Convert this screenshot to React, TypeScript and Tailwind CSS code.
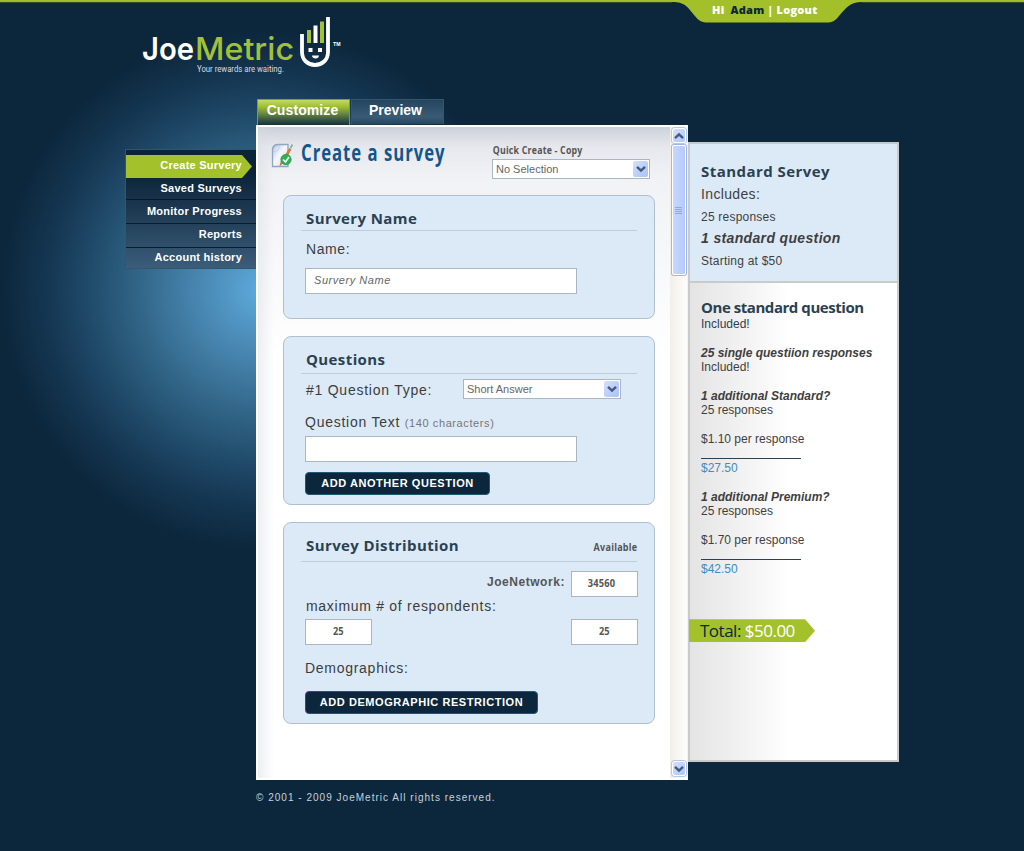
import React from "react";

const sans = "font-['Liberation_Sans',Arial,sans-serif]";
const humanist = "font-['Open_Sans','Noto_Sans',sans-serif]";

function TopBar() {
  return (
    <div className="relative h-[24px] w-full">
      <svg className="block" width="1024" height="24" viewBox="0 0 1024 24">
        <path d="M0 0H1024V2H862C850 2 846 8 839 16C835 21 832 22.500 827 22.500H708C702 22.500 699 21 695 16C688 8 686 2 672 2H0Z" fill="#a3c02b" />
        <path d="M0 2.300H672M862 2.300H1024" stroke="#5d7a2c" strokeWidth="0.600" />
      </svg>
      <div className={`absolute left-[712px] top-[2px] whitespace-nowrap text-[11px] font-extrabold leading-[16px] tracking-[0.25px] text-white ${humanist}`}>
        Hi<span className="ml-[6px] text-[#0c273c]">Adam</span> | Logout
      </div>
    </div>
  );
}

function Logo() {
  return (
    <svg className="ml-[140px] -mt-[9px] block" width="204" height="62" viewBox="140 15 204 62">
      <g fontFamily="Inter, sans-serif" fontSize="31.500" fontWeight="600">
        <text x="142" y="60" fill="#fff" textLength="52" lengthAdjust="spacingAndGlyphs">Joe</text>
        <text x="195" y="60" fill="#a3c03a" fontWeight="500" textLength="99" lengthAdjust="spacingAndGlyphs">Metric</text>
      </g>
      <text x="197" y="71.500" fill="#d5dce2" fontFamily="Roboto, sans-serif" fontSize="8.500" textLength="87" lengthAdjust="spacingAndGlyphs">Your rewards are waiting.</text>
      <path d="M302 34V52C302 60 308 65 315 65S328 60 328 52V17" fill="none" stroke="#fff" strokeWidth="3.800" />
      <path d="M307 30h4v13h-4zM320 21.500h4V43h-4z" fill="#a3c03a" />
      <path d="M313.500 25.500h4V43h-4z M308.500 48h4v4h-4z M318 48h4v4h-4z M312 55.500h7c0 4-7 4-7 0z" fill="#fff" />
      <text x="333" y="45.500" fill="#fff" fontFamily="Liberation Sans" fontWeight="700" fontSize="5" textLength="7.500" lengthAdjust="spacingAndGlyphs">TM</text>
    </svg>
  );
}

function Nav() {
  const row = "h-[24px] border-b border-[#0a1c30] pr-[14px] text-right leading-[19px]";
  return (
    <nav className={`mt-[50px] h-[120px] w-[131px] border border-r-0 border-[#36546c] bg-linear-to-b from-[#0b2439] from-20% to-[#3b5d7a] pt-[5px] text-[11px] font-bold tracking-[0.25px] text-white ${sans}`}>
      <div className="h-[23px] w-[126px] bg-[#a3c12a] pr-[10px] text-right leading-[21px] [clip-path:polygon(0_0,116px_0,100%_50%,116px_100%,0_100%)]">Create Survery</div>
      <div className="h-[22px] border-b border-[#06182c] pr-[14px] text-right leading-[20px]">Saved Surveys</div>
      <div className={`${row} pt-[2px]`}>Monitor Progress</div>
      <div className={`${row} pt-[1px]`}>Reports</div>
      <div className="pr-[14px] text-right leading-[18px]">Account history</div>
    </nav>
  );
}

function Tabs() {
  return (
    <div className={`flex h-[26px] gap-[1px] pl-[1px] text-[14px] font-bold text-white ${sans}`}>
      <div className="h-[26px] w-[93px] border border-b-0 border-[#7d9c3a] bg-linear-to-b from-[#c3db62] via-[#9aba2c] via-30% to-[#14303a] pr-[2px] text-center leading-[21px] tracking-[0.1px]">Customize</div>
      <div className="h-[25px] w-[93px] border border-b-0 border-[#36546c] bg-linear-to-b from-[#25455f] via-[#3a5b76] via-70% to-[#27465e] pr-[4px] text-center leading-[21px]">Preview</div>
    </div>
  );
}

function Chevron({ up }: { up?: boolean }) {
  return (
    <svg width="10" height="8" viewBox="0 0 10 8" className={up ? "rotate-180" : ""}>
      <path d="M1 1.800L5 5.600L9 1.800" fill="none" stroke="#46597f" strokeWidth="2.400" />
    </svg>
  );
}

function Select({ value }: { value: string }) {
  return (
    <div className={`flex h-[20px] w-[158px] items-center border border-[#a9b6c3] bg-white pl-[3px] pr-[1px] text-[11px] text-[#666] ${sans}`}>
      <span className="flex-1">{value}</span>
      <span className="flex h-[16px] w-[15px] items-center justify-center rounded-[2px] bg-linear-to-br from-[#d3e0fd] to-[#a9c1f5]"><Chevron /></span>
    </div>
  );
}

function PageIcon() {
  return (
    <svg width="24" height="26" viewBox="0 0 24 26">
      <defs>
        <linearGradient id="paper" x1="0" y1="0" x2="1" y2="1">
          <stop offset="0" stopColor="#a9c0dc" />
          <stop offset=".45" stopColor="#f4f8fc" />
          <stop offset="1" stopColor="#d5dfeb" />
        </linearGradient>
      </defs>
      <path d="M1.500 6C2 3 4 1.500 7 1.500H17V23.500H1.500Z" fill="url(#paper)" stroke="#8fa5c3" strokeWidth="1.300" />
      <path d="M2 8.500C6 8.500 8.500 6 8 2" fill="#dce8f5" stroke="#b5c6db" strokeWidth=".8" />
      <path d="M9 22.500L10 19L18.500 5.500L20 6.500L12 20Z" fill="#e08a2e" stroke="#b4591e" strokeWidth=".6" />
      <path d="M19.500 5L21.500 1.500" stroke="#7fb997" strokeWidth="1.800" />
      <circle cx="15" cy="16.500" r="5.200" fill="#2fae56" stroke="#1c9247" strokeWidth=".6" />
      <path d="M12 16.500L14.500 19L18 14" fill="none" stroke="#eafff0" strokeWidth="1.700" />
    </svg>
  );
}

function Card({ title, className, head, note, children }: { title: string; className: string; head: string; note?: string; children: React.ReactNode }) {
  return (
    <section className={`ml-[25px] w-[372px] rounded-[8px] border border-[#aebfcd] bg-[#dceaf7] ${className}`}>
      <div className={`ml-[17px] flex w-[336px] border-b border-[#bccddb] pl-[5px] pt-[12px] ${head}`}>
        <h2 className={`flex-1 whitespace-nowrap text-[15px] font-bold leading-[20px] tracking-[0.4px] text-[#2b4152] ${humanist}`}>{title}</h2>
        {note && <span className={`origin-right scale-x-[.82] text-[11px] font-bold leading-[23px] tracking-[0.3px] text-[#555] ${humanist}`}>{note}</span>}
      </div>
      {children}
    </section>
  );
}

const label = "whitespace-nowrap text-[14px] text-[#3d3d3d] font-['Liberation_Sans',Arial,sans-serif]";
const field = "border border-[#aab7c3] bg-white";
const count = `flex h-[26px] w-[67px] items-center justify-center border border-[#aab7c3] bg-white pb-[2px] text-[11px] font-bold text-[#555] ${humanist}`;
const button = `flex h-[23px] items-center justify-center rounded-[4px] border border-[#1b5a76] bg-[#0c273c] text-[11px] font-bold tracking-[0.56px] text-white ${sans}`;

function Scrollbar() {
  const btn = "flex h-[15px] w-[14px] items-center justify-center rounded-[3px] border border-white bg-linear-to-br from-[#d5e1fd] to-[#adc5fb] shadow-[0_0_0_1px_#b3c8ea]";
  return (
    <div className="flex w-[18px] flex-col items-center border-r border-[#f4f4ec] bg-linear-to-r from-[#f1efe8] to-[#fefefb] pb-[2px] pt-px">
      <div className={btn}><Chevron up /></div>
      <div className="mt-[2px] flex h-[130px] w-[14px] flex-col items-center justify-center gap-[1px] rounded-[2px] border border-white bg-linear-to-r from-[#c9d7fd] to-[#b3cafd] shadow-[0_0_0_1px_#9db8e4]">
        {[0, 1, 2, 3].map((i) => <i key={i} className="block h-[1px] w-[7px] bg-[#8ea9dd]" />)}
      </div>
      <div className="flex-1" />
      <div className={btn}><Chevron /></div>
    </div>
  );
}

function Panel() {
  return (
    <main className="flex h-[655px] w-[432px] border-2 border-r-0 border-white bg-white">
      <div className="h-full w-[412px] bg-[linear-gradient(90deg,rgba(215,220,227,.45),rgba(255,255,255,0)_16px),linear-gradient(180deg,#ccd1d9,#e6e8ed_20px,#f1f2f6_50px,#ffffff_230px)]">
        <header className="flex h-[68px]">
          <div className="ml-[13px] mt-[16px]"><PageIcon /></div>
          <h1 className={`ml-[6px] mt-[11px] w-[191px] origin-left scale-x-[.71] whitespace-nowrap text-[23.5px] font-bold leading-[28px] tracking-[1.4px] text-[#11568c] ${humanist}`}>Create a survey</h1>
          <div className="mt-[16px]">
            <div className={`mb-[2px] origin-left scale-x-[.8] whitespace-nowrap pl-[1px] text-[11px] font-bold leading-[14px] tracking-[0.25px] text-[#555] ${humanist}`}>Quick Create - Copy</div>
            <Select value="No Selection" />
          </div>
        </header>
        <Card title="Survery Name" className="h-[124px]" head="h-[35px]">
          <div className={`ml-[22px] mt-[8px] leading-[20px] tracking-[0.6px] ${label}`}>Name:</div>
          <div className={`ml-[21px] mt-[9px] h-[26px] w-[272px] pl-[8px] text-[11px] italic leading-[23px] tracking-[0.55px] text-[#666] ${sans} ${field}`}>Survery Name</div>
        </Card>
        <Card title="Questions" className="mt-[17px] h-[169px]" head="h-[37px]">
          <div className="ml-[22px] mt-[5px] flex h-[20px]">
            <span className={`w-[157px] leading-[22px] tracking-[0.75px] ${label}`}>#1 Question Type:</span>
            <Select value="Short Answer" />
          </div>
          <div className={`ml-[21px] mt-[13px] h-[20px] leading-[20px] tracking-[0.75px] ${label}`}>Question Text <span className="text-[11px] tracking-[0.6px] text-[#777]">(140 characters)</span></div>
          <div className={`ml-[21px] mt-[4px] h-[26px] w-[272px] ${field}`} />
          <div className={`ml-[21px] mt-[10px] w-[185px] ${button}`}>ADD ANOTHER QUESTION</div>
        </Card>
        <Card title="Survey Distribution" className="mt-[17px] h-[202px]" head="h-[39px]" note="Available">
          <div className="ml-[21px] mt-[9px] flex w-[333px] justify-end">
            <span className={`mr-[6px] text-[12px] font-bold leading-[22px] tracking-[0.55px] text-[#555] ${sans}`}>JoeNetwork:</span>
            <div className={count}><span className="-ml-[6px] scale-x-[.84] tracking-[0.3px]">34560</span></div>
          </div>
          <div className={`ml-[22px] leading-[19px] tracking-[0.71px] ${label}`}>maximum # of respondents:</div>
          <div className="ml-[21px] mt-[3px] flex w-[333px] justify-between">
            <div className={count}><span className="scale-x-[.84]">25</span></div>
            <div className={count}><span className="scale-x-[.84]">25</span></div>
          </div>
          <div className={`ml-[21px] mt-[13px] leading-[20px] tracking-[0.72px] ${label}`}>Demographics:</div>
          <div className={`ml-[21px] mt-[13px] w-[233px] ${button}`}>ADD DEMOGRAPHIC RESTRICTION</div>
        </Card>
      </div>
      <Scrollbar />
    </main>
  );
}

function Extra({ title, rate, cost }: { title: string; rate: string; cost: string }) {
  return (
    <div className="mb-[14.4px]">
      <p className="font-bold italic">{title}</p>
      <p>25 responses</p>
      <p className="mt-[14.4px]">{rate}</p>
      <div className="mb-[2px] h-[12.400px] w-[100px] border-b border-[#2b4152]" />
      <p className="mt-[2px] text-[#3e8cc0]">{cost}</p>
    </div>
  );
}

function Sidebar() {
  return (
    <aside className={`mt-[43px] h-[620px] w-[211px] border-2 border-[#c9caca] bg-white text-[#3f3f3f] ${sans}`}>
      <div className="h-[139px] whitespace-nowrap border-b-2 border-[#c9caca] bg-[#dceaf7] pl-[11px] pt-[16px]">
        <h2 className={`text-[15px] font-bold leading-[22px] tracking-[0.45px] text-[#2b4152] ${humanist}`}>Standard Servey</h2>
        <p className="pt-px text-[14px] leading-[22px] tracking-[0.35px]">Includes:</p>
        <p className="text-[12px] leading-[24px] tracking-[0.22px]">25 responses</p>
        <p className="text-[14px] font-bold italic leading-[18px] tracking-[0.35px]">1 standard question</p>
        <p className="pt-[2px] text-[12px] leading-[25px] tracking-[0.22px]">Starting at $50</p>
      </div>
      <div className="h-[477px] whitespace-nowrap bg-linear-to-r from-[#e4e4e4] to-white to-[100px] pt-[15px] text-[12px] leading-[14.4px]">
        <div className="pl-[11px]">
          <h3 className={`text-[15px] font-bold leading-[19px] tracking-[-0.45px] text-[#2b4152] ${humanist}`}>One standard question</h3>
          <p className="mb-[14.4px] text-[#2b4152]">Included!</p>
          <p className="font-bold italic">25 single questiion responses</p>
          <p className="mb-[14.4px]">Included!</p>
          <Extra title="1 additional Standard?" rate="$1.10 per response" cost="$27.50" />
          <Extra title="1 additional Premium?" rate="$1.70 per response" cost="$42.50" />
        </div>
        <div className={`-ml-px mt-[43px] h-[23px] w-[126px] bg-[#a3c12a] pl-[11px] text-[17px] leading-[24px] tracking-[-0.5px] text-white [clip-path:polygon(0_0,116px_0,100%_50%,116px_100%,0_100%)] ${humanist}`}>
          <span className="text-[#0c273c]">Total:</span> $50.00
        </div>
      </div>
    </aside>
  );
}

export default function App() {
  return (
    <div className="h-[851px] w-[1024px] overflow-hidden bg-[#0c273c] bg-[radial-gradient(circle_at_262px_290px,#5dabdc_0px,#4683ad_70px,#2f6283_130px,#1e4766_180px,#143550_218px,#0c273c_260px)]">
      <TopBar />
      <Logo />
      <div className="ml-[125px] mt-[22px] flex">
        <Nav />
        <div>
          <Tabs />
          <Panel />
        </div>
        <Sidebar />
      </div>
      <footer className={`ml-[256px] mt-[10px] text-[10px] leading-[16px] tracking-[1.02px] text-[#c6d2dc] ${sans}`}>© 2001 - 2009 JoeMetric All rights reserved.</footer>
    </div>
  );
}
